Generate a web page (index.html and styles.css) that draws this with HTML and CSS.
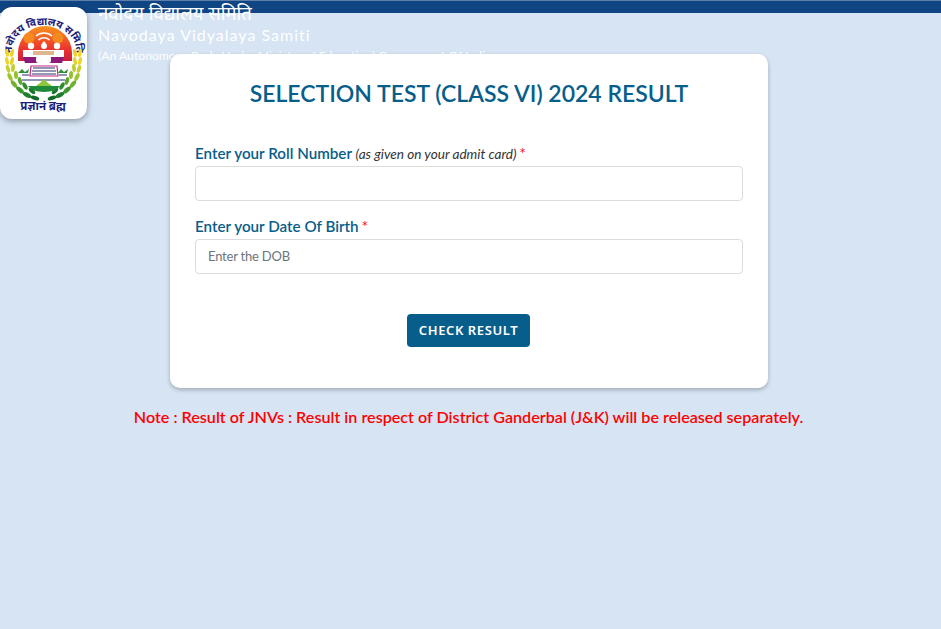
FILE: index.html
```html
<!DOCTYPE html>
<html>
<head>
    <title>Selection Test Result</title>
    <link rel="stylesheet" href="styles.css">
</head>
<body>
    <div class="topbar"></div>
    <div class="brand">
        <div class="logo">
            <svg width="87" height="112" viewBox="0 0 87 112">
                <defs>
                    <path id="arcTop" d="M12 44 A32 26 0 0 1 76 44"/>
                    <linearGradient id="sun" x1="0" y1="0" x2="0" y2="1">
                        <stop offset="0" stop-color="#f7941d"/>
                        <stop offset="0.6" stop-color="#ee3a2c"/>
                        <stop offset="1" stop-color="#c8203c"/>
                    </linearGradient>
                    <g id="wreathSide">
                        <ellipse cx="7" cy="46" rx="1.8" ry="4" fill="#f4d52b" transform="rotate(-12 7 46)"/>
                        <ellipse cx="12" cy="46" rx="1.8" ry="4" fill="#f0d02a" transform="rotate(12 12 46)"/>
                        <ellipse cx="7" cy="54" rx="1.8" ry="4" fill="#eed52a" transform="rotate(-12 7 54)"/>
                        <ellipse cx="12" cy="54" rx="1.8" ry="4" fill="#e6d22c" transform="rotate(12 12 54)"/>
                        <ellipse cx="8" cy="62" rx="1.9" ry="4" fill="#c9cf2e" transform="rotate(-18 8 62)"/>
                        <ellipse cx="13" cy="61" rx="1.9" ry="4" fill="#c2cd2e" transform="rotate(6 13 61)"/>
                        <ellipse cx="10" cy="70" rx="2" ry="4.2" fill="#9ec72e" transform="rotate(-26 10 70)"/>
                        <ellipse cx="16" cy="68" rx="2" ry="4" fill="#94c22e" transform="rotate(-4 16 68)"/>
                        <ellipse cx="14" cy="77" rx="2.1" ry="4.4" fill="#6fb12e" transform="rotate(-38 14 77)"/>
                        <ellipse cx="20" cy="74" rx="2" ry="4" fill="#5fa82d" transform="rotate(-16 20 74)"/>
                        <ellipse cx="20" cy="83" rx="2.2" ry="4.6" fill="#3c962c" transform="rotate(-50 20 83)"/>
                        <ellipse cx="25" cy="79" rx="2" ry="4" fill="#2f8c2c" transform="rotate(-30 25 79)"/>
                        <ellipse cx="27" cy="88" rx="2.2" ry="4.6" fill="#1d7d2b" transform="rotate(-62 27 88)"/>
                        <ellipse cx="32" cy="84" rx="2" ry="4" fill="#1a772a" transform="rotate(-46 32 84)"/>
                        <ellipse cx="35" cy="91" rx="2" ry="4.4" fill="#146a28" transform="rotate(-74 35 91)"/>
                    </g>
                </defs>
                <text class="logo-arc"><textPath href="#arcTop" startOffset="50%" text-anchor="middle">नवोदय विद्यालय समिति</textPath></text>
                <use href="#wreathSide"/>
                <use href="#wreathSide" transform="matrix(-1 0 0 1 87 0)"/>
                <path d="M18 46 A25 25 0 0 1 72 46 L72 54 L18 54 Z" fill="url(#sun)"/>
                <path d="M36 29 A12 12 0 0 1 52 29 M38.500 33 A8 8 0 0 1 49.500 33" fill="none" stroke="#fff" stroke-width="1.500"/>
                <circle cx="44" cy="36" r="1.500" fill="#fff"/>
                <circle cx="29" cy="31" r="5.500" fill="#f58a20"/>
                <circle cx="58" cy="31" r="5.500" fill="#f58a20"/>
                <circle cx="31" cy="39" r="3.200" fill="#fff"/>
                <circle cx="44" cy="39" r="3" fill="#fff"/>
                <circle cx="57" cy="39" r="3.200" fill="#fff"/>
                <rect x="23" y="43" width="41" height="7" fill="#fff"/>
                <rect x="33" y="44" width="21" height="4" fill="#dfb78c"/>
                <path d="M23 50 H64 L62 56 H25 Z" fill="#8c1a76"/>
                <rect x="36" y="49" width="15" height="7" rx="2.500" fill="#fff"/>
                <path d="M31 59 H57 L58 69 H30 Z" fill="#fff" stroke="#c2277f" stroke-width="1.200"/>
                <path d="M33 61 H55 M32 64 H56 M32 67 H56" stroke="#2b2f6b" stroke-width="1.100"/>
                <path d="M18 66 l4 -4 l3 3 l4 -3 l-1 4 Z M58 66 l3 -4 l3 3 l4 -3 l-1 4 Z" fill="#2f8f3a"/>
                <path d="M22 68 H29 M59 68 H67 M22 73 H65" stroke="#23306e" stroke-width="1"/>
                <path d="M28 79 H60 A17 9 0 0 1 28 79 Z" fill="#1f8a3a"/>
                <path d="M36 79 l4 -3 l4 -4 l4 4 l4 3 Z" fill="#8cc63f"/>
                <text class="logo-motto" x="43" y="103" text-anchor="middle">प्रज्ञानं ब्रह्म</text>
            </svg>
        </div>
        <div class="brand-text">
            <div class="brand-hi">नवोदय विद्यालय समिति</div>
            <div class="brand-en">Navodaya Vidyalaya Samiti</div>
            <div class="brand-sub">(An Autonomous Body Under Ministry of Education) Government Of India</div>
        </div>
    </div>

    <div class="card">
        <h2>SELECTION TEST (CLASS VI) 2024 RESULT</h2>
        <div class="input-group">
            <label for="roll">Enter your Roll Number <em>(as given on your admit card)</em> <span class="req">*</span></label>
            <input type="text" id="roll">
        </div>
        <div class="input-group">
            <label for="dob">Enter your Date Of Birth <span class="req">*</span></label>
            <input type="text" id="dob" placeholder="Enter the DOB">
        </div>
        <div class="actions">
            <button>CHECK RESULT</button>
        </div>
    </div>
    <p class="note">Note : Result of JNVs : Result in respect of District Ganderbal (J&amp;K) will be released separately.</p>
</body>
</html>
```

FILE: styles.css
```css
* {
    box-sizing: border-box;
}
body {
    margin: 0;
    background-color: #d6e4f4;
    font-family: Lato, "Noto Sans", sans-serif;
    overflow: hidden;
}
.topbar {
    height: 13px;
    background-color: #0f4583;
    border-top: 1px solid #5d7fa8;
}
.brand {
    position: absolute;
    top: 0;
    left: 0;
    display: flex;
    gap: 11px;
}
.logo {
    margin-top: 7px;
    width: 87px;
    height: 112px;
    background-color: #fff;
    border-radius: 12px;
    box-shadow: 0 2px 6px rgba(0, 0, 0, 0.35);
}
.logo-arc {
    font-size: 10.5px;
    font-weight: bold;
    fill: #1c1c7c;
}
.logo-motto {
    font-size: 11.5px;
    font-weight: bold;
    fill: #1c1c7c;
}
.brand-text {
    color: #fff;
    white-space: nowrap;
}
.brand-hi {
    font-size: 18.5px;
    line-height: 27px;
}
.brand-en {
    font-size: 16px;
    letter-spacing: 1px;
    line-height: 16px;
}
.brand-sub {
    font-size: 12.2px;
    line-height: 26px;
}
.card {
    position: relative;
    width: 598px;
    height: 334px;
    margin: 41px 0 0 170px;
    padding: 24px 25px;
    background-color: #fff;
    border-radius: 10px;
    box-shadow: 0 2px 4px rgba(0, 0, 0, 0.25);
}
h2 {
    margin: 0 0 33px;
    color: #085e8b;
    font-size: 23px;
    font-weight: 600;
    line-height: 31px;
    text-align: center;
}
.input-group {
    margin-bottom: 15px;
}
.input-group + .input-group label {
    margin-top: -1px;
    margin-bottom: 2px;
}
label {
    display: block;
    margin-bottom: 1px;
    color: #085e8b;
    font-size: 15.2px;
    font-weight: 600;
    line-height: 22px;
}
label em {
    color: #333;
    font-size: 13.6px;
    font-weight: normal;
}
.req {
    margin-left: -1px;
    color: #f0143c;
    font-weight: normal;
    font-size: 16px;
    line-height: 1;
}
input {
    display: block;
    width: 100%;
    height: 35px;
    padding: 5px 12px 7px;
    border: 1px solid #dcdcdc;
    border-radius: 4px;
    font-family: Lato, sans-serif;
    font-size: 13px;
    letter-spacing: -0.2px;
}
input::placeholder {
    color: #6c757d;
}
.actions {
    margin-top: 40px;
    padding-right: 1px;
    text-align: center;
}
button {
    width: 123px;
    height: 33px;
    padding: 0 0 2px;
    background-color: #085e8b;
    color: #fff;
    border: none;
    border-radius: 4px;
    font-family: "Noto Sans", sans-serif;
    font-size: 13px;
    font-weight: 600;
    letter-spacing: 0.6px;
}
.note {
    margin: 19px 0 0;
    color: #f00;
    font-size: 16.15px;
    font-weight: 600;
    line-height: 20px;
    text-align: center;
    padding-right: 4px;
}
```
